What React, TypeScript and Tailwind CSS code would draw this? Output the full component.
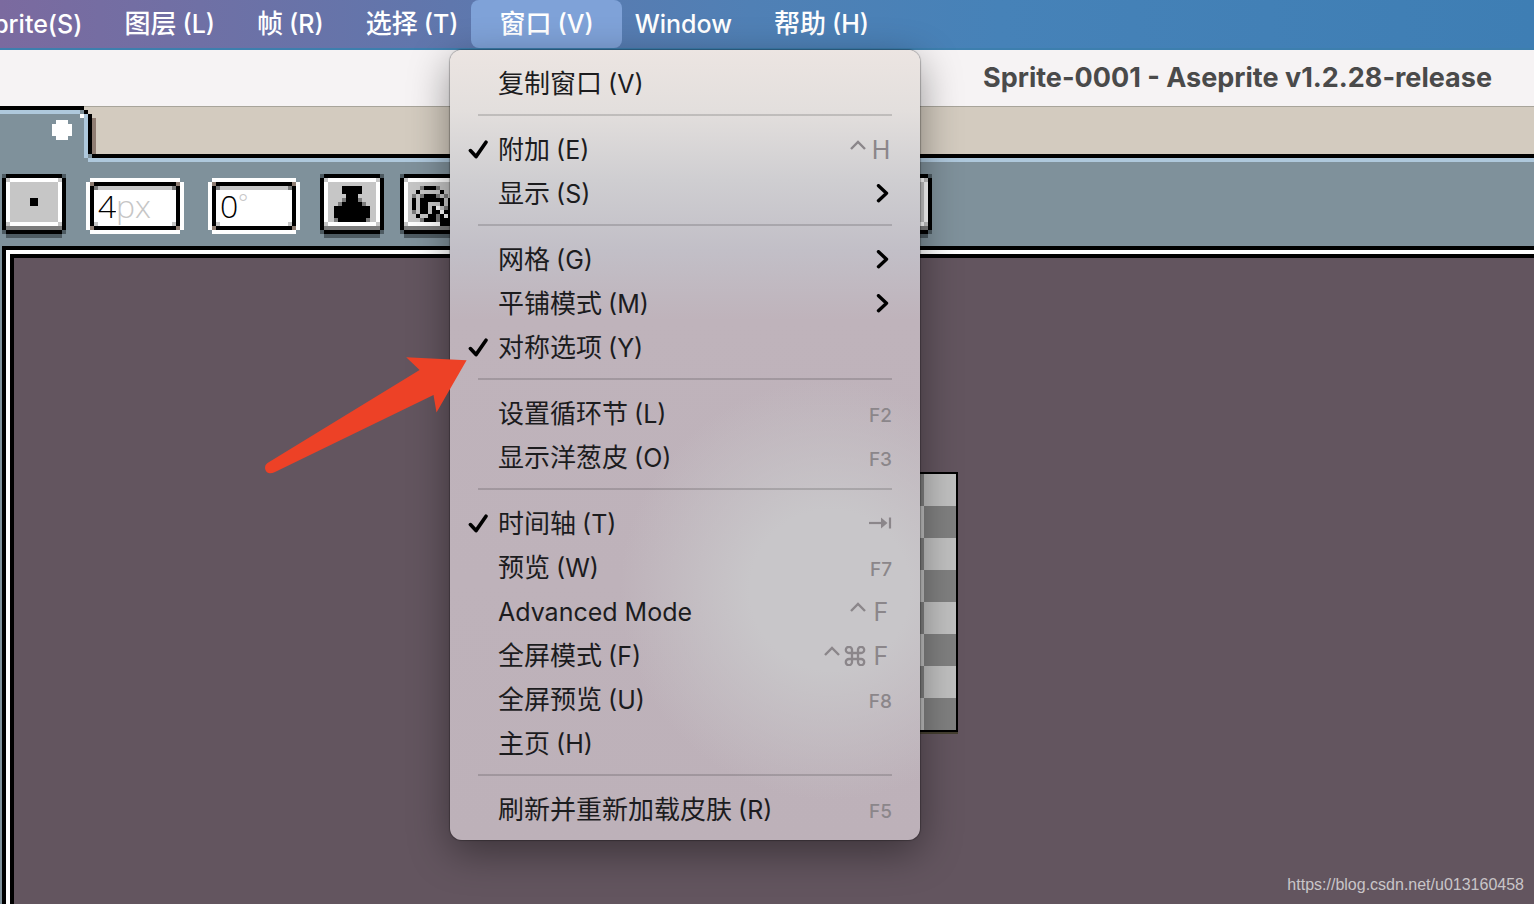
import { Fragment } from 'react'
import type { ReactNode } from 'react'

const palette: Record<string, string> = {
  k: '#000000',
  w: '#ffffff',
  l: '#c6c6c6',
  g: '#7c7c7c',
  d: '#4d5a61',
  t: '#8f7d72',
  b: '#aec8dc',
  s: '#7f919b',
}

// One character per 4px cell, "." is see-through
const PixelArt = ({ rows, className }: { rows: string[]; className?: string }) => (
  <svg
    width={rows[0].length * 4}
    height={rows.length * 4}
    viewBox={`0 0 ${rows[0].length} ${rows.length}`}
    shapeRendering="crispEdges"
    className={className}
    aria-hidden="true"
  >
    {rows.map((row, y) =>
      row.split('').map((c, x) => (c === '.' ? null : <rect key={`${x}-${y}`} x={x} y={y} width="1" height="1" fill={palette[c]} />))
    )}
  </svg>
)

const buttonFrame = [
  'dkkkkkkkkkkkkkkd',
  'klwwwwwwwwwwwwlk',
  'kwllllllllllllwk',
  'kwllllllllllllwk',
  'kwllllllllllllwk',
  'kwllllllllllllwk',
  'kwllllllllllllwk',
  'kwllllllllllllwk',
  'kwllllllllllllwk',
  'kwllllllllllllwk',
  'kwllllllllllllwk',
  'kwllllllllllllwk',
  'klwwwwwwwwwwwwlk',
  'kggggggggggggggk',
  'dkkkkkkkkkkkkkkd',
  '.dddddddddddddd.',
]

const stamp = [
  '..kkkkk..',
  '..kkkkk..',
  '...kkk...',
  '..gkkkg..',
  '.gkkkkkg.',
  'kkkkkkkkk',
  'kkkkkkkkk',
  'kkkkkkkkk',
  'gkkkkkkkg',
]

const target = [
  '..gkkkg...',
  '.k.....k..',
  'g.gkkkg.g.',
  'k.kkkkkk.k',
  'k.kk...k.k',
  'k.kk.kw.gk',
  'g.kk.kkwkk',
  '.k..kkgkwk',
  '..gkkkgkkk',
  '.......kkk',
]

const dot = ['.www.', 'wwwww', 'wwwww', 'wwwww', '.www.']

const tabEdge = [
  'k...',
  'sk..',
  'wbk.',
  'sbkt',
  'sbkt',
  'sbkt',
  'sbkt',
  'sbkt',
  'sbkt',
  'sbkt',
  'sbkt',
  'sbkt',
  'sbsk',
  'ssbb',
]

const ToolButton = ({ label, children }: { label: string; children?: ReactNode }) => (
  <button type="button" aria-label={label} className="grid shrink-0 justify-items-center">
    <PixelArt rows={buttonFrame} className="col-start-1 row-start-1" />
    <span className="col-start-1 row-start-1 mt-3">{children}</span>
  </button>
)

const NumberField = ({ label, value, children, className }: { label: string; value: string; children: ReactNode; className: string }) => (
  <label
    className={`relative flex h-12 shrink-0 items-center border-4 border-black bg-white pl-1 font-['Open_Sans',sans-serif] text-[32px] leading-10 font-light shadow-[0_-4px_0_#fff,0_4px_0_#fff,-4px_0_0_#fff,4px_0_0_#fff,inset_0_4px_0_#c6c6c6] ${className}`}
  >
    <input aria-label={label} defaultValue={value} className="w-[18px] bg-transparent text-black outline-none" />
    {children}
    <span className="absolute -top-1 -left-1 size-1 bg-[#8f7d72]" />
    <span className="absolute -top-1 -right-1 size-1 bg-[#8f7d72]" />
    <span className="absolute -bottom-1 -left-1 size-1 bg-[#8f7d72]" />
    <span className="absolute -right-1 -bottom-1 size-1 bg-[#8f7d72]" />
    <span className="absolute top-0 left-0 size-1 bg-[#7c7c7c]" />
    <span className="absolute top-0 right-0 size-1 bg-[#7c7c7c]" />
    <span className="absolute bottom-0 left-0 size-1 bg-[#c6c6c6]" />
    <span className="absolute right-0 bottom-0 size-1 bg-[#c6c6c6]" />
  </label>
)

const Check = () => (
  <svg width="20" height="20" viewBox="0 0 20 20" fill="none" stroke="#000" strokeWidth="3.6" strokeLinecap="round" strokeLinejoin="round" aria-hidden="true">
    <path d="M2.4 10.6L8 16.6L18 2.2" />
  </svg>
)

const Submenu = () => (
  <svg width="16" height="20" viewBox="0 0 16 20" fill="none" stroke="#000" strokeWidth="3.4" strokeLinecap="round" strokeLinejoin="round" aria-hidden="true">
    <path d="M2.5 1.7L10.5 9.2L2.5 16.7" />
  </svg>
)

const Ctrl = () => (
  <svg width="16" height="20" viewBox="0 0 16 20" fill="none" stroke="currentColor" strokeWidth="2.4" aria-label="Control">
    <path d="M1 9L8 2L15 9" />
  </svg>
)

const Cmd = () => (
  <svg width="22" height="20" viewBox="0 0 22 20" fill="none" stroke="currentColor" strokeWidth="2.3" aria-label="Command">
    <path d="M8 7V4.3A3.1 3.1 0 1 0 4.9 7H17.1A3.1 3.1 0 1 0 14 4.3V16A3.1 3.1 0 1 0 17.1 13H4.9A3.1 3.1 0 1 0 8 16Z" />
  </svg>
)

const TabKey = () => (
  <svg width="24" height="14" viewBox="0 0 24 14" aria-label="Tab">
    <path d="M1 6H14" stroke="currentColor" strokeWidth="2.2" />
    <path d="M13 0.5L19.5 6L13 11.5Z" fill="currentColor" />
    <path d="M22 0.5V11.5" stroke="currentColor" strokeWidth="2.2" />
  </svg>
)

const Shortcut = ({ keys }: { keys: string }) => {
  if (keys === 'tab') return <TabKey />
  if (keys.startsWith('F')) return <span className="block pt-1 text-[19px] leading-6 font-medium">{keys}</span>
  return (
    <span className="flex items-center gap-1 text-[25px] leading-8">
      <Ctrl />
      {keys.includes('cmd') && <Cmd />}
      <span className="w-[22px]">{keys.slice(-1)}</span>
    </span>
  )
}

type Item = { name: string; hint?: string; keys?: string; checked?: boolean; submenu?: boolean }

const groups: Item[][] = [
  [{ name: '复制窗口', hint: '(V)' }],
  [
    { name: '附加', hint: '(E)', keys: 'ctrl+H', checked: true },
    { name: '显示', hint: '(S)', submenu: true },
  ],
  [
    { name: '网格', hint: '(G)', submenu: true },
    { name: '平铺模式', hint: '(M)', submenu: true },
    { name: '对称选项', hint: '(Y)', checked: true },
  ],
  [
    { name: '设置循环节', hint: '(L)', keys: 'F2' },
    { name: '显示洋葱皮', hint: '(O)', keys: 'F3' },
  ],
  [
    { name: '时间轴', hint: '(T)', keys: 'tab', checked: true },
    { name: '预览', hint: '(W)', keys: 'F7' },
    { name: 'Advanced Mode', keys: 'ctrl+F' },
    { name: '全屏模式', hint: '(F)', keys: 'ctrl+cmd+F' },
    { name: '全屏预览', hint: '(U)', keys: 'F8' },
    { name: '主页', hint: '(H)' },
  ],
  [{ name: '刷新并重新加载皮肤', hint: '(R)', keys: 'F5' }],
]

// Chinese names are set a little larger than the latin text beside them
const Label = ({ name, hint }: { name: string; hint?: string }) => (
  <span className="flex items-baseline gap-1.5 text-[25px] leading-8">
    <span className={hint ? 'text-[26px]' : ''}>{name}</span>
    {hint && <span>{hint}</span>}
  </span>
)

const WindowMenu = () => (
  <div
    role="menu"
    className="absolute top-[50px] left-[450px] w-[470px] rounded-xl bg-[radial-gradient(circle_at_380px_540px,#c8c6c9_0,#c8c6c9_80px,transparent_210px),linear-gradient(#ece5e2_0,#e3dfdd_60px,#cfced1_130px,#c2bfc7_200px,#bfb3bb_270px,#bdb1b9_100%)] py-2.5 text-[#1c1c1e] shadow-[0_0_1px_1px_rgba(0,0,0,0.25),0_12px_40px_rgba(0,0,0,0.4)]"
  >
    {groups.map((items, i) => (
      <Fragment key={i}>
        {i > 0 && <hr className="mx-7 my-2.5 h-0.5 border-0 bg-black/15" />}
        {items.map((item) => (
          <button
            key={item.name}
            type="button"
            role={item.checked ? 'menuitemcheckbox' : 'menuitem'}
            aria-checked={item.checked}
            className="flex h-11 w-full items-center pt-[3px] pr-7 pl-[18px]"
          >
            <span className="w-[30px] shrink-0">{item.checked && <Check />}</span>
            <Label name={item.name} hint={item.hint} />
            <span className="ml-auto text-[#8b868a]">
              {item.keys && <Shortcut keys={item.keys} />}
              {item.submenu && <Submenu />}
            </span>
          </button>
        ))}
      </Fragment>
    ))}
  </div>
)

const barItems = [
  { name: '图层', hint: '(L)' },
  { name: '帧', hint: '(R)' },
  { name: '选择', hint: '(T)' },
  { name: '窗口', hint: '(V)', open: true },
  { name: 'Window' },
  { name: '帮助', hint: '(H)' },
]

const MenuBar = () => (
  <nav className="flex h-[50px] overflow-hidden border-b-2 border-[#3d7fae] bg-[linear-gradient(90deg,#7b6a9f_0,#6f70a5_200px,#5f77ad_450px,#5080b5_750px,#4682b8_1000px,#3e7eb4_100%)] font-medium text-white text-shadow-[0_2px_4px_rgba(0,0,0,0.2)]">
    <button type="button" className="-ml-[44px] shrink-0 px-[21px] text-[25px] leading-8">
      Sprite(S)
    </button>
    {barItems.map((item) => (
      <button
        key={item.name}
        type="button"
        className={`flex shrink-0 items-center ${item.open ? '-mx-2 rounded-lg bg-[#7fa2d8] px-7' : 'px-[21px]'}`}
      >
        <Label name={item.name} hint={item.hint} />
      </button>
    ))}
  </nav>
)

const TabStrip = () => (
  <div className="flex h-[55px] bg-[#d3cbbf]">
    <div className="-mt-px h-14 w-20 shrink-0 border-t-4 border-black bg-[#7f919b]">
      <div className="h-1 bg-[#aec8dc]" />
      <PixelArt rows={dot} className="mt-1.5 ml-[52px]" />
    </div>
    <PixelArt rows={tabEdge} className="-mt-px shrink-0" />
    <div className="flex-1 border-b-4 border-[#aec8dc]">
      <div className="h-[51px] border-b-4 border-black" />
    </div>
  </div>
)

const App = () => (
  <div className="relative flex min-h-screen flex-col overflow-hidden bg-[#7f919b] font-['Inter','Noto_Sans_CJK_SC',sans-serif]">
    <MenuBar />
    <header className="flex h-[57px] items-center justify-end border-b border-[#a8a49a] bg-[#f6f3f4] pr-[42px]">
      <h1 className="text-[27px] leading-8 font-bold text-[#4a4a4a]">Sprite-0001 - Aseprite v1.2.28-release</h1>
    </header>
    <TabStrip />
    <div className="flex h-[84px] items-start pt-3 pl-0.5">
      <ToolButton label="Brush">
        <span className="mt-3 block size-2 bg-black" />
      </ToolButton>
      <NumberField label="Size" value="4" className="mt-2 ml-6 w-[90px]">
        <span className="text-[#c6c6c6]">px</span>
      </NumberField>
      <NumberField label="Angle" value="0" className="mt-2 ml-8 w-[84px]">
        <span className="pb-2 text-2xl text-[#c6c6c6]">°</span>
      </NumberField>
      <div className="ml-6 flex gap-4">
        <ToolButton label="Stamp">
          <PixelArt rows={stamp} />
        </ToolButton>
        <div className="flex w-[532px] justify-between">
          <ToolButton label="Target">
            <PixelArt rows={target} />
          </ToolButton>
          <ToolButton label="Symmetry" />
        </div>
      </div>
    </div>
    <main className="ml-0.5 flex flex-1 border-t-4 border-l-4 border-black">
      <div className="flex flex-1 border-t-4 border-l-4 border-white">
        <div className="relative flex-1 border-t-4 border-l-4 border-black bg-[#63555f]">
          <div className="absolute top-[214px] left-[684px] size-[260px] border-2 border-black bg-[conic-gradient(#c0c0c0_25%,#808080_0_50%,#c0c0c0_0_75%,#808080_0)] bg-size-[64px_64px] shadow-[0_2px_0_#453f30]" />
        </div>
      </div>
    </main>
    <WindowMenu />
    <svg className="absolute top-[350px] left-[260px]" width="210" height="130" viewBox="260 350 210 130" aria-hidden="true">
      <path d="M466.6 360.3L406.2 357.2L419.6 370L267.5 463C263.5 465.5 264.5 472.5 269.5 473.3Q272 473.5 275 472L433.5 395L436.5 412.5Z" fill="#ed4126" />
    </svg>
    <a
      href="https://blog.csdn.net/u013160458"
      className="absolute right-2.5 bottom-[7px] font-['Liberation_Sans',sans-serif] text-[16px] leading-6 text-[#c9c5c8]"
    >
      https://blog.csdn.net/u013160458
    </a>
  </div>
)

export default App
